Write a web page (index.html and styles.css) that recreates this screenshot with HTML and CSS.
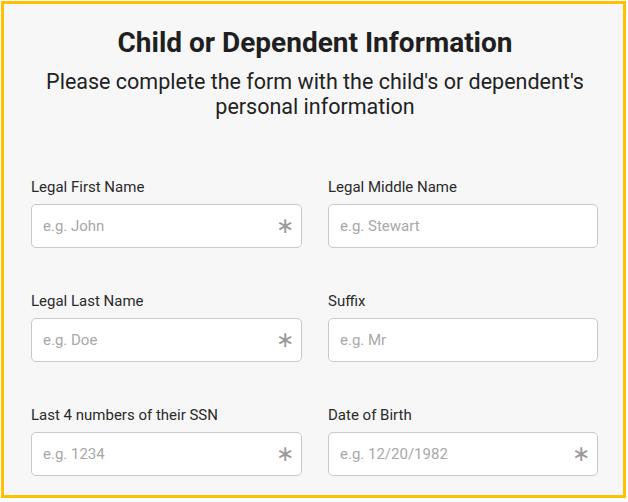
FILE: index.html
```html
<!DOCTYPE html>
<html>
<head>
<meta charset="utf-8">
<link rel="stylesheet" href="styles.css">
</head>
<body>
<div class="card">
  <h1 class="title">Child or Dependent Information</h1>
  <p class="subtitle">Please complete the form with the child's or dependent's personal information</p>
  <div class="grid">
    <div class="field">
      <label class="label">Legal First Name</label>
      <div class="input"><span class="ph">e.g. John</span><span class="req">&#x2217;</span></div>
    </div>
    <div class="field">
      <label class="label">Legal Middle Name</label>
      <div class="input"><span class="ph">e.g. Stewart</span></div>
    </div>
    <div class="field">
      <label class="label">Legal Last Name</label>
      <div class="input"><span class="ph">e.g. Doe</span><span class="req">&#x2217;</span></div>
    </div>
    <div class="field">
      <label class="label">Suffix</label>
      <div class="input"><span class="ph">e.g. Mr</span></div>
    </div>
    <div class="field">
      <label class="label">Last 4 numbers of their SSN</label>
      <div class="input"><span class="ph">e.g. 1234</span><span class="req">&#x2217;</span></div>
    </div>
    <div class="field">
      <label class="label">Date of Birth</label>
      <div class="input"><span class="ph">e.g. 12/20/1982</span><span class="req">&#x2217;</span></div>
    </div>
  </div>
</div>
</body>
</html>
```
FILE: styles.css
```css
html, body {
  margin: 0;
  padding: 0;
  background: #ffffff;
}
body {
  font-family: Roboto, "Liberation Sans", sans-serif;
  color: #222222;
  padding: 1px 2px 4px 1px;
}
.card {
  box-sizing: border-box;
  width: 625px;
  height: 497px;
  border: 3px solid #fdc100;
  background: #f7f7f7;
  padding: 23px 24px 0 27px;
}
.title {
  margin: 0;
  text-align: center;
  font-size: 28px;
  line-height: 32px;
  font-weight: 700;
  color: #1f1f1f;
}
.subtitle {
  margin: 10px 0 0 0;
  text-align: center;
  font-size: 21.5px;
  line-height: 25px;
  font-weight: 400;
  color: #222222;
}
.grid {
  margin-top: 58px;
  display: grid;
  grid-template-columns: 271px 270px;
  column-gap: 26px;
  row-gap: 43px;
}
.field {
  display: flex;
  flex-direction: column;
}
.label {
  font-size: 15px;
  line-height: 20px;
  margin-bottom: 7px;
  color: #2a2a2a;
}
.input {
  box-sizing: border-box;
  height: 44px;
  border: 1px solid #c9c9c9;
  border-radius: 5px;
  background: #ffffff;
  display: flex;
  align-items: center;
  justify-content: space-between;
  padding: 0 7px 0 11px;
}
.ph {
  font-size: 15px;
  color: #a8a8a8;
}
.req {
  font-size: 22px;
  color: #9a9a9a;
  line-height: 1;
}
```
